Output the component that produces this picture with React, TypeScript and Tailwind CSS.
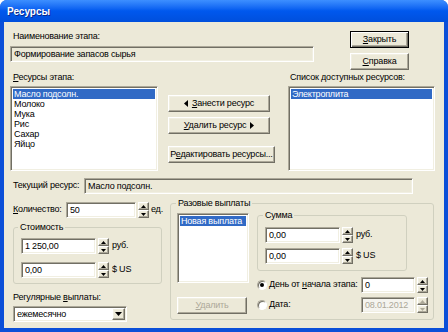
import React from 'react';

const sunken =
  'border border-t-[#aca899] border-l-[#aca899] border-b-white border-r-white shadow-[inset_1px_1px_0_#716f64,inset_-1px_-1px_0_#f1efe2]';
const raised =
  'border border-t-white border-l-white border-b-[#716f64] border-r-[#716f64] shadow-[inset_-1px_-1px_0_#aca899,inset_1px_1px_0_#f1efe2] bg-[#ece9d8]';

const Tri = ({ up, color = '#000' }: { up?: boolean; color?: string }) => (
  <svg width="5" height="3" viewBox="0 0 5 3">
    <polygon points={up ? '2.5,0 5,3 0,3' : '0,0 5,0 2.5,3'} fill={color} />
  </svg>
);

const Btn = ({
  children,
  className = '',
  disabled,
  isDefault,
}: {
  children: React.ReactNode;
  className?: string;
  disabled?: boolean;
  isDefault?: boolean;
}) => (
  <div
    className={`${
      isDefault
        ? 'border border-black bg-[#ece9d8] shadow-[inset_1px_1px_0_#fff,inset_-1px_-1px_0_#716f64,inset_-2px_-2px_0_#aca899]'
        : raised
    } flex items-center justify-center h-[17px] leading-none whitespace-nowrap ${disabled ? 'text-[#aca899]' : ''} ${className}`}
  >
    {children}
  </div>
);

const Spin = ({ disabled }: { disabled?: boolean }) => {
  const c = disabled ? '#aca899' : '#000';
  return (
    <div className="flex flex-col w-[11px] h-[16px] ml-[2px] shrink-0">
      <div className={`${raised} flex-1 flex items-center justify-center`}>
        <Tri up color={c} />
      </div>
      <div className={`${raised} flex-1 flex items-center justify-center`}>
        <Tri color={c} />
      </div>
    </div>
  );
};

const Field = ({
  value,
  className = '',
  readOnly,
  disabled,
}: {
  value: string;
  className?: string;
  readOnly?: boolean;
  disabled?: boolean;
}) => (
  <div
    className={`${sunken} h-[16px] shrink-0 flex items-center px-[3px] leading-none whitespace-nowrap overflow-hidden ${
      readOnly ? 'bg-[#ece9d8]' : disabled ? 'bg-[#f5f4ef] text-[#aca899]' : 'bg-white'
    } ${className}`}
  >
    {value}
  </div>
);

const SpinField = ({
  value,
  unit,
  disabled,
  w = 'w-[75px]',
}: {
  value: string;
  unit?: string;
  disabled?: boolean;
  w?: string;
}) => (
  <div className="flex items-center whitespace-nowrap">
    <Field value={value} disabled={disabled} className={w} />
    <Spin disabled={disabled} />
    {unit && <span className="ml-[3px]">{unit}</span>}
  </div>
);

const Radio = ({ checked }: { checked?: boolean }) => (
  <div className="w-[10px] h-[10px] rounded-full bg-white border border-t-[#aca899] border-l-[#aca899] border-b-white border-r-white shadow-[inset_1px_1px_0_#716f64] flex items-center justify-center shrink-0">
    {checked && <div className="w-[4px] h-[4px] rounded-full bg-black" />}
  </div>
);

const ListBox = ({ items, className = '' }: { items: string[]; className?: string }) => (
  <div className={`${sunken} bg-white p-[2px] ${className}`}>
    {items.map((it, i) => (
      <div
        key={it}
        className={`h-[10px] leading-[10px] px-[1px] whitespace-nowrap ${i === 0 ? 'bg-[#316ac5] text-white' : ''}`}
      >
        {it}
      </div>
    ))}
  </div>
);

export default function App() {
  return (
    <div className="w-[448px] h-[332px] bg-white font-['Liberation_Sans',Arial,sans-serif] text-[9px] tracking-[-0.2px] text-black select-none whitespace-nowrap">
      <div className="w-full h-full flex flex-col rounded-t-[7px] overflow-hidden bg-[#0b4fd8]">
        {/* title bar */}
        <div className="h-[22px] shrink-0 bg-gradient-to-b from-[#3d8fff] via-[#0058ee] to-[#004fdc] flex items-center pl-[7px]">
          <span className="text-white font-bold text-[10px] tracking-normal [text-shadow:1px_1px_0_#0a2a8a]">Ресурсы</span>
        </div>

        <div className="flex-1 mx-[4px] mb-[4px] bg-[#ece9d8] flex flex-col pl-[6px] pt-[9px]">
          {/* row A */}
          <div className="flex h-[39px]">
            <div className="w-[304px] flex flex-col">
              <div className="leading-[11px] pl-[3px]">Наименование этапа:</div>
              <Field value="Формирование запасов сырья" readOnly className="mt-[4px]" />
            </div>
            <div className="ml-[36px] flex flex-col gap-[5px]">
              <Btn isDefault className="w-[59px]">
                <span>
                  <u>З</u>акрыть
                </span>
              </Btn>
              <Btn className="w-[59px]">
                <span>
                  <u>С</u>правка
                </span>
              </Btn>
            </div>
          </div>

          {/* row B */}
          <div className="flex mt-[2px]">
            <div className="w-[148px] flex flex-col">
              <div className="leading-[11px] pl-[3px]">
                <u>Р</u>есурсы этапа:
              </div>
              <ListBox
                className="mt-[3px] h-[85px]"
                items={['Масло подсолн.', 'Молоко', 'Мука', 'Рис', 'Сахар', 'Яйцо']}
              />
            </div>
            <div className="ml-[10px] w-[107px] flex flex-col pt-[23px]">
              <Btn className="w-[102px] gap-[4px]">
                <svg width="4" height="7" viewBox="0 0 4 7">
                  <polygon points="4,0 4,7 0,3.5" fill="#000" />
                </svg>
                <span>
                  <u>З</u>анести ресурс
                </span>
              </Btn>
              <Btn className="w-[102px] mt-[5px] gap-[4px]">
                <span>
                  <u>У</u>далить ресурс
                </span>
                <svg width="4" height="7" viewBox="0 0 4 7">
                  <polygon points="0,0 4,3.5 0,7" fill="#000" />
                </svg>
              </Btn>
              <Btn className="w-[107px] mt-[12px]">
                <span>
                  Р<u>е</u>дактировать ресурсы...
                </span>
              </Btn>
            </div>
            <div className="ml-[13px] w-[147px] flex flex-col">
              <div className="leading-[11px] pl-[2px]">
                Список <u>д</u>оступных ресурсов:
              </div>
              <ListBox className="mt-[3px] h-[85px]" items={['Электроплита']} />
            </div>
          </div>

          {/* row C */}
          <div className="flex items-center mt-[7px]">
            <div className="w-[74px] pl-[3px]">Текущий ресурс:</div>
            <Field value="Масло подсолн." readOnly className="w-[329px]" />
          </div>

          {/* row D */}
          <div className="flex mt-[3px]">
            <div className="w-[156px] flex flex-col">
              <div className="flex items-center mt-[5px]">
                <div className="w-[56px] pl-[3px]">
                  <u>К</u>оличество:
                </div>
                <Field value="50" className="w-[70px]" />
                <Spin />
                <span className="ml-[2px]">ед.</span>
              </div>

              <fieldset className="ml-[3px] mt-[3px] w-[149px] h-[63px] border border-[#d0d0bf] rounded-[3px]">
                <legend className="ml-[4px] px-[2px] leading-[12px]">Стоимость</legend>
                <div className="flex flex-col gap-[8px] pl-[7px] mt-[5px]">
                  <SpinField value="1 250,00" unit="руб." />
                  <SpinField value="0,00" unit="$ US" />
                </div>
              </fieldset>

              <div className="mt-[7px] leading-[12px] pl-[3px]">
                Регулярные <u>в</u>ыплаты:
              </div>
              <div className={`${sunken} bg-white ml-[3px] mt-[3px] h-[16px] w-[114px] flex items-center pl-[3px] pr-[1px]`}>
                <span className="flex-1 leading-none">ежемесячно</span>
                <div className={`${raised} w-[13px] h-[12px] flex items-center justify-center`}>
                  <svg width="7" height="4" viewBox="0 0 7 4">
                    <polygon points="0,0 7,0 3.5,4" fill="#000" />
                  </svg>
                </div>
              </div>
            </div>

            <fieldset className="ml-[4px] w-[264px] h-[123px] border border-[#d0d0bf] rounded-[3px]">
              <legend className="ml-[5px] px-[2px] leading-[12px]">Разовые выплаты</legend>
              <div className="flex pl-[6px]">
                <div className="flex flex-col w-[72px]">
                  <ListBox className="mt-[4px] h-[70px]" items={['Новая выплата']} />
                  <Btn disabled className="w-[70px] mt-[14px] h-[16px]">
                    <span>
                      <u>У</u>далить
                    </span>
                  </Btn>
                </div>
                <div className="ml-[8px] flex flex-col">
                  <fieldset className="w-[150px] h-[62px] border border-[#d0d0bf] rounded-[3px]">
                    <legend className="ml-[5px] px-[2px] leading-[12px]">Сумма</legend>
                    <div className="flex flex-col gap-[5px] pl-[7px] mt-[6px]">
                      <SpinField value="0,00" unit="руб." />
                      <SpinField value="0,00" unit="$ US" />
                    </div>
                  </fieldset>
                  <div className="flex items-center mt-[6px]">
                    <Radio checked />
                    <div className="w-[94px] pl-[2px]">
                      День от <u>н</u>ачала этапа:
                    </div>
                    <SpinField value="0" w="w-[54px]" />
                  </div>
                  <div className="flex items-center mt-[4px]">
                    <Radio />
                    <div className="w-[94px] pl-[2px]">
                      <u>Д</u>ата:
                    </div>
                    <SpinField value="08.01.2012" w="w-[54px]" disabled />
                  </div>
                </div>
              </div>
            </fieldset>
          </div>
        </div>
      </div>
    </div>
  );
}
